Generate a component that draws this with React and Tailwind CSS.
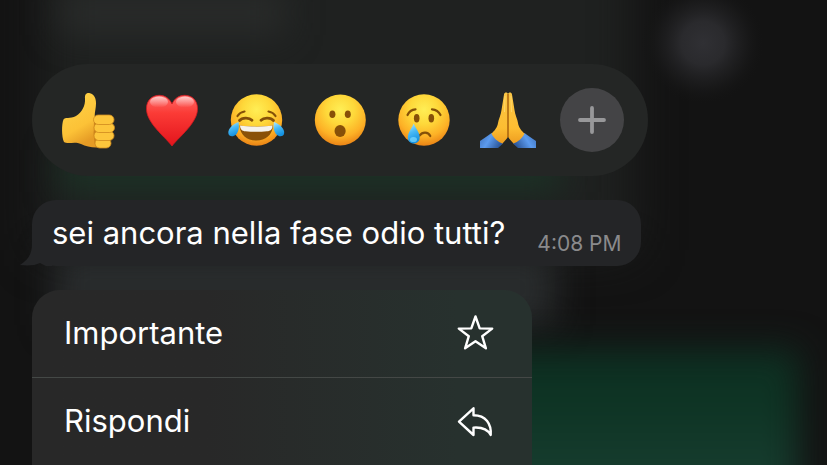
const FaceGradient = ({ id }) => (
  <defs>
    <radialGradient id={id} cx="0.5" cy="0.3" r="0.7">
      <stop offset="0" stopColor="#ffee55" />
      <stop offset="0.4" stopColor="#fed83a" />
      <stop offset="0.75" stopColor="#fdb126" />
      <stop offset="1" stopColor="#ea8416" />
    </radialGradient>
    <linearGradient id={`${id}-tear`} x1="0" y1="0" x2="0.3" y2="1">
      <stop offset="0" stopColor="#b5ecff" />
      <stop offset="0.5" stopColor="#48b9f5" />
      <stop offset="1" stopColor="#1592e2" />
    </linearGradient>
  </defs>
);

const ThumbsUp = () => (
  <svg viewBox="0 0 64 64" className="size-16" aria-hidden="true">
    <defs>
      <linearGradient id="thumb" x1="0" y1="0" x2="0.4" y2="1">
        <stop offset="0" stopColor="#ffd54a" />
        <stop offset="0.7" stopColor="#fcc237" />
        <stop offset="1" stopColor="#e59b25" />
      </linearGradient>
    </defs>
    <path
      d="M7.500 31.500C9 29 14 31 20 28C26 24 29.500 18 29 10.500C28.500 6 31 4.500 34 5.200C38 6 40 10 40 15.500C40 20 38.700 24 38.700 28L43 59.500C36 60 30 58.500 25 56C19 53 12 56.500 8 54C5.500 49 5.500 36 7.500 31.500Z"
      fill="url(#thumb)"
    />
    <path d="M40 31C38.500 36 40 41 39 45C40 50 39 54 41 58" fill="none" stroke="#c47b16" strokeWidth="3" opacity="0.8" />
    <g fill="#fdc63c" stroke="#cf8a1e" strokeWidth="0.8">
      <rect x="39" y="50.500" width="16" height="9.500" rx="4.700" />
      <rect x="38" y="43" width="20" height="9.500" rx="4.700" />
      <rect x="38" y="35" width="20.500" height="9.500" rx="4.700" />
      <rect x="37.500" y="27" width="20.500" height="9.500" rx="4.700" />
    </g>
  </svg>
);

const Heart = () => (
  <svg viewBox="0 0 64 64" className="size-16" aria-hidden="true">
    <defs>
      <linearGradient id="heart" x1="0" y1="0" x2="0" y2="1">
        <stop offset="0" stopColor="#ff6b68" />
        <stop offset="0.35" stopColor="#fb3b36" />
        <stop offset="1" stopColor="#e3141c" />
      </linearGradient>
      <linearGradient id="heart-shine" x1="0" y1="0" x2="0" y2="1">
        <stop offset="0" stopColor="#fff" stopOpacity="0.65" />
        <stop offset="1" stopColor="#fff" stopOpacity="0" />
      </linearGradient>
    </defs>
    <path
      d="M32 58C28.500 53 20 46 13.500 37.500C8.500 30.500 6.500 26 6.500 20.500C6.500 12.500 12 7.300 19.200 7.300C25 7.300 29.500 10.500 32 16C34.500 10.500 39 7.300 44.800 7.300C52 7.300 57.500 12.500 57.500 20.500C57.500 26 55.500 30.500 50.500 37.500C44 46 35.500 53 32 58Z"
      fill="url(#heart)"
      stroke="#d51820"
      strokeWidth="0.800"
    />
    <ellipse cx="19" cy="14" rx="9" ry="5.500" fill="url(#heart-shine)" />
    <ellipse cx="45" cy="14" rx="9" ry="5.500" fill="url(#heart-shine)" />
  </svg>
);

const Joy = () => (
  <svg viewBox="0 0 64 64" className="size-16" aria-hidden="true">
    <FaceGradient id="joy" />
    <circle cx="32.500" cy="32" r="25.700" fill="url(#joy)" />
    <g fill="none" stroke="#855008" strokeWidth="2.200" strokeLinecap="round">
      <path d="M13.500 28C15 25.500 17.500 24 20.500 23.500" />
      <path d="M44.500 23.500C47.500 24 50 25.500 51.500 28" />
      <path d="M15.500 32.500C18 29.500 25 29 28 32.300" strokeWidth="2.800" />
      <path d="M37 32.300C40 29 47 29.500 49.500 32.500" strokeWidth="2.800" />
    </g>
    <path d="M15.500 37.500C26 39 39 39 49 37.500C48.500 47 41.500 52.500 32.300 52.500C23 52.500 16 47 15.500 37.500Z" fill="#8a5108" />
    <path d="M16 37.500C26 39 39 39 48.500 37.500C48.500 41.500 46.500 43 43 43.300C36 44 28 44 21.500 43.300C18 43 16.200 41.500 16 37.500Z" fill="#f5f2ec" />
    <path d="M14.500 34C8 36.500 4 41 4.300 45C4.600 48.500 9 49.500 12 46.500C15 43 15.300 38.500 14.500 34Z" fill="url(#joy-tear)" />
    <path d="M50 34C56.500 36.500 60.500 41 60.200 45C59.900 48.500 55.500 49.500 52.500 46.500C49.500 43 49.200 38.500 50 34Z" fill="url(#joy-tear)" />
  </svg>
);

const Surprised = () => (
  <svg viewBox="0 0 64 64" className="size-16" aria-hidden="true">
    <FaceGradient id="wow" />
    <circle cx="32.300" cy="32" r="25.500" fill="url(#wow)" />
    <g fill="#875008">
      <ellipse cx="24.400" cy="26.300" rx="3" ry="3.800" />
      <ellipse cx="39.800" cy="26.300" rx="3" ry="3.800" />
      <ellipse cx="32.100" cy="43" rx="5.600" ry="6" />
    </g>
  </svg>
);

const Crying = () => (
  <svg viewBox="0 0 64 64" className="size-16" aria-hidden="true">
    <FaceGradient id="cry" />
    <circle cx="32" cy="32" r="25.700" fill="url(#cry)" />
    <g fill="none" stroke="#855008" strokeWidth="2.200" strokeLinecap="round">
      <path d="M15.500 27C17 23.500 20 21.500 23.500 21.300" />
      <path d="M40 21.300C44 21.500 46.800 23.500 48.500 27" />
      <path d="M27.500 47.500C30.500 43.500 36 43.500 38.300 48" />
    </g>
    <ellipse cx="24.700" cy="30.300" rx="2.800" ry="4.200" fill="#875008" />
    <ellipse cx="39.300" cy="30.300" rx="2.800" ry="4.200" fill="#875008" />
    <path d="M21.700 35.500C19.500 41 15.800 44.500 15.800 49.500C15.800 53 18.300 55.500 21.700 55.500C25.200 55.500 27.700 53 27.700 49.500C27.700 44.500 24 41 21.700 35.500Z" fill="url(#cry-tear)" />
    <ellipse cx="21.500" cy="51.500" rx="3.500" ry="2.600" fill="#7fdcff" opacity="0.700" />
  </svg>
);

const FoldedHands = () => (
  <svg viewBox="0 0 64 64" className="size-16" aria-hidden="true">
    <defs>
      <linearGradient id="sleeve-left" x1="0" y1="0" x2="1" y2="0.4">
        <stop offset="0" stopColor="#3d70bb" />
        <stop offset="0.5" stopColor="#5c9bee" />
        <stop offset="1" stopColor="#2f5b9f" />
      </linearGradient>
      <linearGradient id="sleeve-right" x1="1" y1="0" x2="0" y2="0.4">
        <stop offset="0" stopColor="#3d70bb" />
        <stop offset="0.5" stopColor="#5c9bee" />
        <stop offset="1" stopColor="#2f5b9f" />
      </linearGradient>
      <linearGradient id="hands" x1="0" y1="0" x2="0" y2="1">
        <stop offset="0" stopColor="#fbc544" />
        <stop offset="0.7" stopColor="#fdbd32" />
        <stop offset="1" stopColor="#ee9d20" />
      </linearGradient>
    </defs>
    <path d="M4 53C8 50 12 48 15.500 45L27 55.500L22 60H4Z" fill="url(#sleeve-left)" />
    <path d="M60 53C56 50 52 48 48.500 45L37 55.500L42 60H60Z" fill="url(#sleeve-right)" />
    <path
      d="M32 6C31 4 28.500 4 28 6.500L25.500 22C25 27 22.500 31 22 35C21.500 39 18.500 43 15.500 45.500C17.500 50 22 54 26.500 55.500C29 52.500 31 51 32 48.500C33 51 35 52.500 37.500 55.500C42 54 46.500 50 48.500 45.500C45.500 43 42.500 39 42 35C41.500 31 39 27 38.500 22L36 6.500C35.500 4 33 4 32 6Z"
      fill="url(#hands)"
    />
    <path d="M32 6V49" stroke="#a9620d" strokeWidth="1.500" />
    <path d="M29 8L28.500 24M35 8L35.500 24" stroke="#ffe07a" strokeWidth="1" opacity="0.700" />
  </svg>
);

const StarIcon = () => (
  <svg viewBox="0 0 48 48" className="size-12" fill="none" stroke="currentColor" strokeWidth="2.400" strokeLinejoin="round" aria-hidden="true">
    <path d="M23.500 6.500L27.700 18.400L40.200 18.600L30.200 26.200L33.900 38.300L23.500 31.200L13.100 38.300L16.800 26.200L6.800 18.600L19.300 18.400Z" />
  </svg>
);

const ReplyIcon = () => (
  <svg viewBox="0 0 48 48" className="size-12" fill="none" stroke="currentColor" strokeWidth="2.400" strokeLinejoin="round" aria-hidden="true">
    <path d="M21.500 10.300L7 23.700L21.500 37V29.600C30 29 35.500 31 38.700 37C39.500 26 34 17.300 21.500 17.300Z" />
  </svg>
);

// The conversation behind the menu, out of focus
const Backdrop = () => (
  <svg
    viewBox="0 0 827 465"
    preserveAspectRatio="none"
    className="absolute inset-0 -z-10 size-full"
    aria-hidden="true"
  >
    <defs>
      <filter id="soft" x="-50%" y="-100%" width="200%" height="300%" colorInterpolationFilters="sRGB">
        <feGaussianBlur stdDeviation="24" />
      </filter>
      <filter id="tight" x="-100%" y="-150%" width="300%" height="400%" colorInterpolationFilters="sRGB">
        <feGaussianBlur stdDeviation="17" />
      </filter>
      <radialGradient id="glow">
        <stop offset="0" stopColor="#303034" />
        <stop offset="0.35" stopColor="#2a2a2d" />
        <stop offset="0.7" stopColor="#1c1c1d" stopOpacity="0.7" />
        <stop offset="1" stopColor="#131313" stopOpacity="0" />
      </radialGradient>
      <linearGradient id="sent" x1="0" y1="0" x2="0" y2="1">
        <stop offset="0" stopColor="#0d3022" />
        <stop offset="0.3" stopColor="#0e3424" />
        <stop offset="0.65" stopColor="#163c2e" />
      </linearGradient>
    </defs>
    <rect width="827" height="465" fill="#131313" />
    <rect x="42" y="-80" width="590" height="330" fill="#1f2120" filter="url(#soft)" />
    <rect x="60" y="-10" width="225" height="45" fill="#292b2a" filter="url(#tight)" />
    <rect x="60" y="150" width="500" height="42" fill="#1c3226" filter="url(#tight)" />
    <rect x="55" y="250" width="500" height="75" fill="#292c2d" filter="url(#tight)" />
    <circle cx="703" cy="43" r="62" fill="url(#glow)" />
    <rect x="440" y="350" width="358" height="180" fill="url(#sent)" filter="url(#tight)" />
  </svg>
);

const reactions = [
  { label: 'Mi piace', icon: ThumbsUp },
  { label: 'Cuore', icon: Heart },
  { label: 'Risata', icon: Joy },
  { label: 'Sorpresa', icon: Surprised },
  { label: 'Tristezza', icon: Crying },
  { label: 'Grazie', icon: FoldedHands },
];

const actions = [
  { label: 'Importante', icon: StarIcon },
  { label: 'Rispondi', icon: ReplyIcon },
];

export default function App() {
  return (
    <main className="relative isolate flex h-screen flex-col items-start gap-6 overflow-hidden bg-[#131313] px-8 pt-16 font-[Inter,sans-serif] text-white">
      <Backdrop />

      <div className="flex shrink-0 items-center gap-5 rounded-full bg-[#242625] p-6">
        {reactions.map((reaction) => (
          <button key={reaction.label} type="button" aria-label={reaction.label}>
            <reaction.icon />
          </button>
        ))}
        <button
          type="button"
          aria-label="Altre reazioni"
          className="flex size-16 items-center justify-center rounded-full bg-[#444446] text-[#98989a]"
        >
          <svg viewBox="0 0 32 32" className="size-8" fill="none" stroke="currentColor" strokeWidth="3.800" strokeLinecap="round" aria-hidden="true">
            <path d="M16 4V28M4 16H28" />
          </svg>
        </button>
      </div>

      <div className="relative flex shrink-0 items-end gap-8 rounded-3xl bg-[#242527] px-5 py-2">
        <svg viewBox="0 0 32 32" className="absolute bottom-0 -left-3 size-8" fill="#242527" aria-hidden="true">
          <path d="M12 0V10C12 20 8 26 0 31C8 32 15 31.500 20 29L26 32H32V0Z" />
        </svg>
        <p className="relative text-[31px] leading-[50px]">sei ancora nella fase odio tutti?</p>
        <time className="relative text-[21px] leading-7 text-[#8a8a8c]">4:08 PM</time>
      </div>

      <ul className="w-[500px] max-w-full shrink-0 divide-y divide-[#444846] rounded-t-[28px] bg-linear-to-r from-[#282828] from-35% to-[#27312e] to-85%">
        {actions.map((action) => (
          <li key={action.label}>
            <button type="button" className="flex h-[87px] w-full items-center justify-between px-8 text-[31px]">
              {action.label}
              <action.icon />
            </button>
          </li>
        ))}
      </ul>
    </main>
  );
}
